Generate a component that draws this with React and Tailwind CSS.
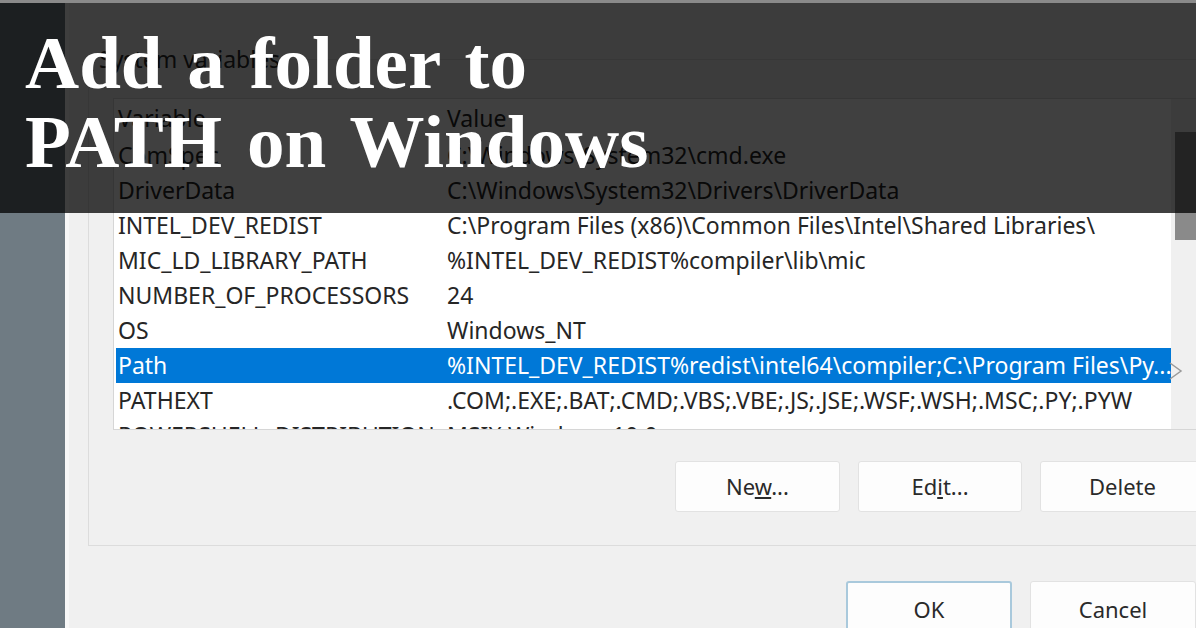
import React from 'react';

const rows = [
  { name: 'ComSpec', value: 'C:\\Windows\\System32\\cmd.exe' },
  { name: 'DriverData', value: 'C:\\Windows\\System32\\Drivers\\DriverData' },
  { name: 'INTEL_DEV_REDIST', value: 'C:\\Program Files (x86)\\Common Files\\Intel\\Shared Libraries\\' },
  { name: 'MIC_LD_LIBRARY_PATH', value: '%INTEL_DEV_REDIST%compiler\\lib\\mic' },
  { name: 'NUMBER_OF_PROCESSORS', value: '24' },
  { name: 'OS', value: 'Windows_NT' },
  { name: 'Path', value: '%INTEL_DEV_REDIST%redist\\intel64\\compiler;C:\\Program Files\\Py...', selected: true },
  { name: 'PATHEXT', value: '.COM;.EXE;.BAT;.CMD;.VBS;.VBE;.JS;.JSE;.WSF;.WSH;.MSC;.PY;.PYW' },
  { name: 'POWERSHELL_DISTRIBUTION_CHANNEL', value: 'MSIX:Windows 10.0' },
];

const ui = { fontFamily: '"Noto Sans", "Open Sans", sans-serif' };

function Button({ children, primary, className = '' }) {
  return (
    <div
      className={`h-[51px] flex items-center justify-center bg-[#fdfdfd] rounded-[3px] text-[22px] text-[#2a2a2a] ${
        primary ? 'border-2 border-[#a9c9dc]' : 'border border-[#e2e2e2]'
      } ${className}`}
    >
      {children}
    </div>
  );
}

export default function App() {
  return (
    <div className="relative w-[1196px] h-[628px] overflow-hidden flex bg-[#6f7b83]" style={ui}>
      <div className="w-[65px] shrink-0" />

      <div className="flex-1 bg-[#f0f0f0] border-l-[4px] border-[#f7f7f7] overflow-hidden">
        <fieldset className="mt-[44px] ml-[19px] w-[1160px] border border-[#dcdcdc] pb-[33px]">
          <legend className="ml-[6px] px-[4px] text-[23px] leading-[30px] text-[#2a2a2a]">System variables</legend>

          <div className="ml-[24px] mt-[24px] w-[1090px] h-[332px] flex border border-[#d6d6d6] bg-white overflow-hidden">
            <div className="w-[1057px] shrink-0 text-[23px] text-[#262626]">
              <div className="h-[39px] flex items-center pl-[4px]">
                <span className="w-[329px]">Variable</span>
                <span>Value</span>
              </div>
              {rows.map((r) => (
                <div
                  key={r.name}
                  className={`h-[35px] ml-[2px] flex items-center pl-[2px] whitespace-nowrap overflow-hidden ${
                    r.selected ? 'bg-[#0078d7] text-white' : ''
                  }`}
                >
                  <span className="w-[329px] shrink-0 overflow-hidden pr-[6px]">{r.name}</span>
                  <span>{r.value}</span>
                </div>
              ))}
            </div>
            <div className="flex-1 bg-[#f0f0f0] pl-[4px] pt-[33px]">
              <div className="h-[108px] bg-[#8a8a8a]" />
            </div>
          </div>

          <div className="ml-[586px] mt-[31px] flex gap-[18px]">
            <Button className="w-[165px]">
              <span>Ne<span className="underline">w</span>...</span>
            </Button>
            <Button className="w-[164px]">
              <span>Ed<span className="underline">i</span>t...</span>
            </Button>
            <Button className="w-[165px]">Delete</Button>
          </div>
        </fieldset>

        <div className="ml-[777px] mt-[35px] flex gap-[18px]">
          <Button primary className="w-[166px] h-[56px]">OK</Button>
          <Button className="w-[166px] h-[56px]">Cancel</Button>
        </div>
      </div>

      {/* mouse cursor */}
      <svg className="absolute left-[1169px] top-[362px]" width="16" height="18" viewBox="0 0 16 18">
        <path d="M1 1 L12 9 L1 17" fill="none" stroke="#9a9a9a" strokeWidth="1.5" />
      </svg>

      {/* title banner over the screenshot */}
      <div className="absolute left-0 right-0 top-0 h-[213px] bg-black/75 border-t-[3px] border-[#8a8a8a]">
        <div
          className="pl-[25px] pt-[20px] text-white font-bold text-[75px] leading-[79px] [word-spacing:6px]"
          style={{ fontFamily: '"Liberation Serif", "Times New Roman", serif' }}
        >
          Add a folder to
          <br />
          PATH on Windows
        </div>
      </div>
    </div>
  );
}
